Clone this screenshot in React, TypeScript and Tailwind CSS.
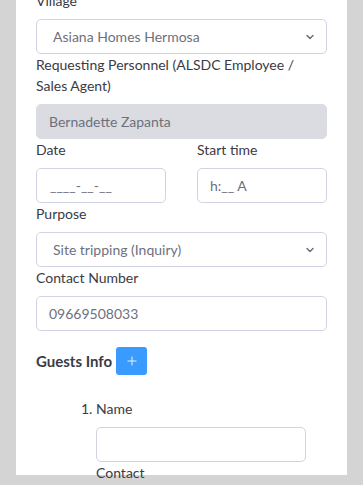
import { ChevronDown, Plus } from 'lucide-react';

const labelCls = 'block text-[14px] leading-[21px] text-[#3a3b45] mb-2';
const boxCls =
  'h-[35px] rounded-[5px] border px-3 text-[14px] text-[#6e707e] flex items-center';
const inputCls = `${boxCls} w-full bg-white border-[#d1d3e2]`;

function Select({ value }: { value: string }) {
  return (
    <div className={`${inputCls} justify-between pl-[16px] pr-[10px]`}>
      <span>{value}</span>
      <ChevronDown className="w-[12px] h-[12px] text-[#6e707e]" strokeWidth={3} />
    </div>
  );
}

export default function App() {
  return (
    <div
      className="h-[485px] overflow-hidden bg-[#d4d4d4] px-4"
      style={{ fontFamily: 'Lato, "Open Sans", sans-serif' }}
    >
      <div className="h-full bg-white px-5 -mt-[10px]">
        <label className={labelCls}>Village</label>
        <Select value="Asiana Homes Hermosa" />

        <label className={labelCls}>
          Requesting Personnel (ALSDC Employee / Sales Agent)
        </label>
        <div className={`${boxCls} w-full bg-[#dadce1] border-[#dadce1]`}>Bernadette Zapanta</div>

        <div className="grid grid-cols-[130px_130px] justify-between">
          <div>
            <label className={labelCls}>Date</label>
            <div className={inputCls}>
              <span className="ml-[1px]">____-__-__</span>
            </div>
          </div>
          <div>
            <label className={labelCls}>Start time</label>
            <div className={inputCls}>h:__ A</div>
          </div>
        </div>

        <label className={labelCls}>Purpose</label>
        <Select value="Site tripping (Inquiry)" />

        <label className={labelCls}>Contact Number</label>
        <div className={inputCls}>09669508033</div>

        <div className="mt-[16px] flex items-center gap-[4px]">
          <span className="text-[15px] font-bold text-[#3a3b45]">Guests Info</span>
          <button className="w-[31px] h-[28px] rounded-[3px] bg-[#3a9bff] flex items-center justify-center">
            <Plus className="w-[14px] h-[14px] text-white" strokeWidth={1.5} />
          </button>
        </div>

        <ol className="mt-[23px] pl-[60px] list-decimal marker:text-[#3a3b45]">
          <li className="text-[14px] text-[#3a3b45]">
            <label className={labelCls}>Name</label>
            <div className={`${boxCls} w-[210px] bg-white border-[#d1d3e2]`}></div>
            <label className={labelCls}>Contact</label>
          </li>
        </ol>
      </div>
    </div>
  );
}
